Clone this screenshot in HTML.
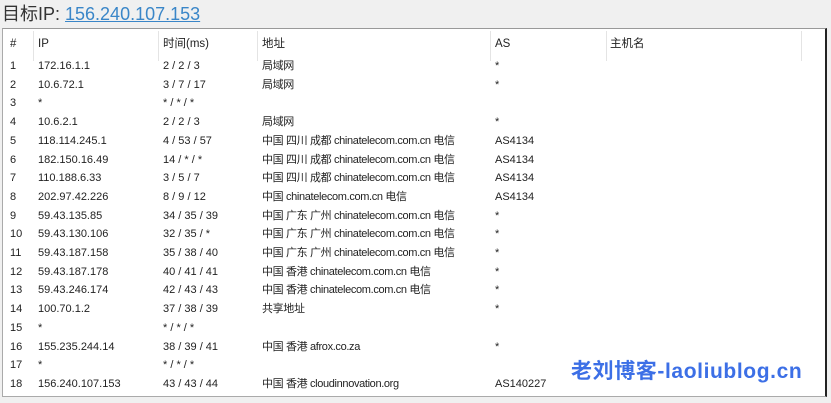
<!DOCTYPE html>
<html><head><meta charset="utf-8"><style>
body{margin:0;width:831px;height:403px;background:#f0f0f0;position:relative;overflow:hidden;font-family:"Liberation Sans","Noto Sans CJK SC",sans-serif;color:#222}
.title{position:absolute;left:2px;top:1px;font-size:18px;color:#333;line-height:26px}
.title a{color:#3a86c8;text-decoration:underline}
.box{position:absolute;left:2px;top:28px;width:822px;height:367px;background:#fff;border-top:1px solid #999;border-left:1px solid #aaa;border-right:2px solid #222;border-bottom:1px solid #aaa}
.r{position:absolute;left:0;height:18px;font-size:11px;line-height:18px;white-space:nowrap}
.r span{position:absolute;top:0}
.h{font-size:11.5px}
.sep{position:absolute;top:2px;width:1px;height:30px;background:#e4e4e4}
.wm{position:absolute;left:571px;top:355px;font-size:21px;font-weight:bold;color:#3c6fe6;letter-spacing:0.6px;white-space:nowrap}
</style></head><body>
<div class="title">目标IP: <a>156.240.107.153</a></div>
<div class="box">
<div class="sep" style="left:30px"></div><div class="sep" style="left:155px"></div><div class="sep" style="left:254px"></div><div class="sep" style="left:487px"></div><div class="sep" style="left:603px"></div><div class="sep" style="left:798px"></div>
</div>
<div id="rows"></div>
<div class="wm">老刘博客-laoliublog.cn</div>
<script>
var d=[["#","IP","时间(ms)","地址","AS","主机名"],
["1","172.16.1.1","2 / 2 / 3","局域网","*"],
["2","10.6.72.1","3 / 7 / 17","局域网","*"],
["3","*","* / * / *","",""],
["4","10.6.2.1","2 / 2 / 3","局域网","*"],
["5","118.114.245.1","4 / 53 / 57","中国 四川 成都 chinatelecom.com.cn 电信","AS4134"],
["6","182.150.16.49","14 / * / *","中国 四川 成都 chinatelecom.com.cn 电信","AS4134"],
["7","110.188.6.33","3 / 5 / 7","中国 四川 成都 chinatelecom.com.cn 电信","AS4134"],
["8","202.97.42.226","8 / 9 / 12","中国 chinatelecom.com.cn 电信","AS4134"],
["9","59.43.135.85","34 / 35 / 39","中国 广东 广州 chinatelecom.com.cn 电信","*"],
["10","59.43.130.106","32 / 35 / *","中国 广东 广州 chinatelecom.com.cn 电信","*"],
["11","59.43.187.158","35 / 38 / 40","中国 广东 广州 chinatelecom.com.cn 电信","*"],
["12","59.43.187.178","40 / 41 / 41","中国 香港 chinatelecom.com.cn 电信","*"],
["13","59.43.246.174","42 / 43 / 43","中国 香港 chinatelecom.com.cn 电信","*"],
["14","100.70.1.2","37 / 38 / 39","共享地址","*"],
["15","*","* / * / *","",""],
["16","155.235.244.14","38 / 39 / 41","中国 香港 afrox.co.za","*"],
["17","*","* / * / *","",""],
["18","156.240.107.153","43 / 43 / 44","中国 香港 cloudinnovation.org","AS140227"]];
var x=[10,38,163,262,495,610],h="";
d.forEach(function(r,i){var y=i==0?35:57+(i-1)*18.7;h+='<div class="r'+(i==0?' h':'')+'" style="top:'+y+'px">';r.forEach(function(c,j){var st='left:'+x[j]+'px';if(j==3&&i>0)st+=';font-size:11px;letter-spacing:-0.35px';h+='<span style="'+st+'">'+c+'</span>'});h+='</div>'});
document.getElementById('rows').innerHTML=h;
</script>
</body></html>
